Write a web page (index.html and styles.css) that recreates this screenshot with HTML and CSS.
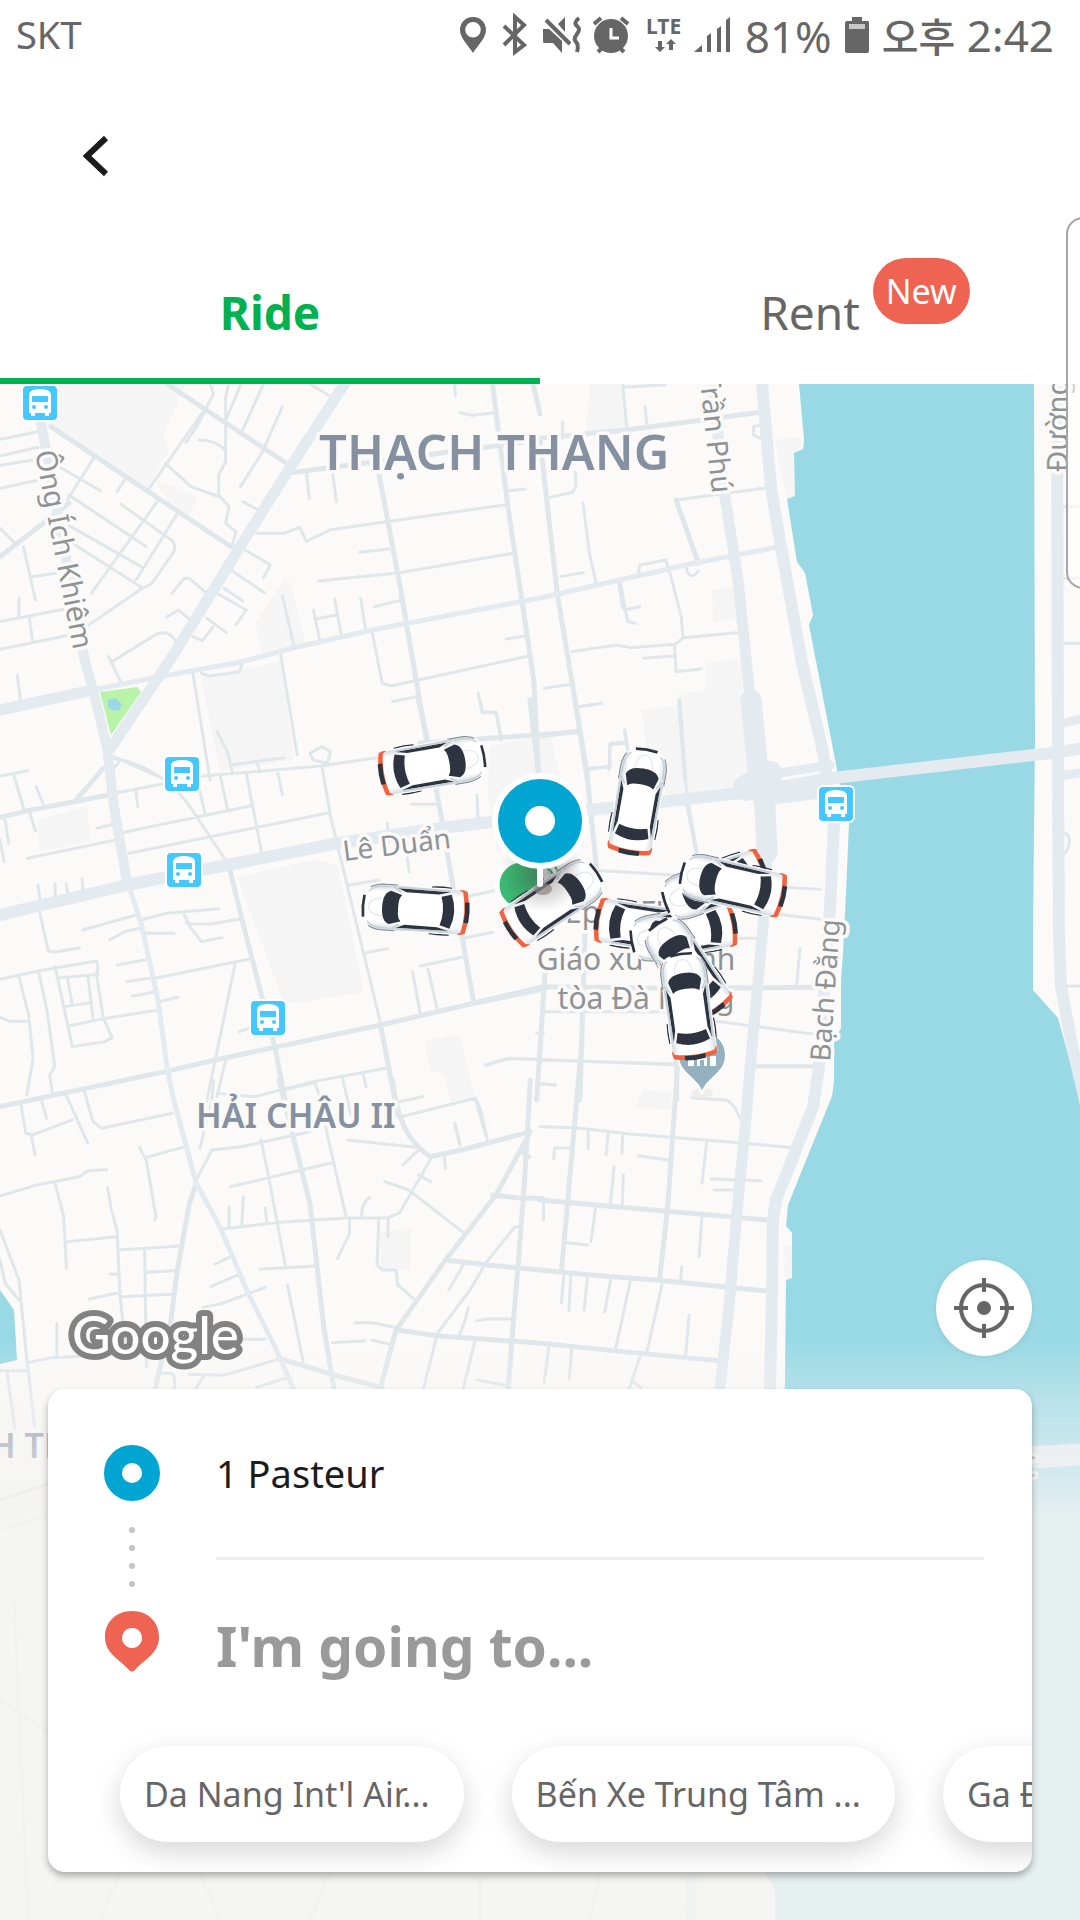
FILE: index.html
```html
<!DOCTYPE html>
<html lang="en">
<head>
<meta charset="utf-8">
<meta name="viewport" content="width=device-width, initial-scale=1">
<title>Ride</title>
<link rel="stylesheet" href="styles.css">
</head>
<body>
<div class="app">
  <header class="status">
    <span class="carrier">SKT</span>
    <div class="indicators">
      <svg class="glyphs" width="272" height="48" viewBox="459 12 272 48" aria-hidden="true">
        <path fill-rule="evenodd" d="M472 17c-8 0-13 6-13 13 0 8 8 15 13 23 5-8 13-15 13-23 0-7-5-13-13-13zm0 5a7 7 0 0 1 0 15.500a7 7 0 0 1 0-15.500z"/>
        <path class="line" d="M503 26l20 19-9 7V17l9 8-20 20"/>
        <path d="M542 29h6l13 12v12l-9-10h-9q-1 0-1-2zM564 17v15l-7-8z"/>
        <path class="line" d="M545 20l24 24"/>
        <path class="line" d="M578 18q-6 5-2 8t0 8-1 8 1 10"/>
        <circle cx="610" cy="36" r="17"/>
        <path class="line" d="M593 24l7-6M627 24l-7-6M597 52l5-5M623 52l-5-5"/>
        <path d="M610 28v10h8" fill="none" stroke="#fff" stroke-width="3"/>
        <text x="645" y="34">LTE</text>
        <path d="M657 41h4v6h3l-5 5-5-5h3zM668 50h4v-6h3l-5-5-5 5h3z"/>
        <path d="M693 52h8v-7zM706 36l4-3v19h-4zM716 29l4-3v26h-4zM725 20l4-3v35h-4z"/>
      </svg>
      <span>81%</span>
      <svg class="glyphs" width="24" height="48" viewBox="846 12 24 48" aria-hidden="true">
        <path d="M853 17h10v4h6q1 0 1 2v28q0 2-2 2h-20q-2 0-2-2V23q0-2 2-2h5z"/>
        <path d="M850 24h16v5h-16z" fill="#c8c8c8"/>
      </svg>
      <span class="time"><span class="ampm">오후</span> 2:42</span>
    </div>
  </header>

  <nav class="topbar">
    <button class="back" type="button" aria-label="Back">
      <svg width="28" height="44" viewBox="0 0 28 44" aria-hidden="true"><path d="M24 4L5 22l19 18" fill="none" stroke="#1c1c1c" stroke-width="6"/></svg>
    </button>
  </nav>

  <nav class="tabs">
    <a class="tab active" href="#ride">Ride</a>
    <a class="tab" href="#rent">Rent<span class="badge">New</span></a>
  </nav>

  <main class="stage">
    <svg class="map" viewBox="0 384 1080 1536" preserveAspectRatio="xMidYMin slice" role="img" aria-label="Map of Da Nang">
      <defs>
        <linearGradient id="fade" x1="0" y1="0" x2="0" y2="1">
          <stop offset="0" stop-color="#f3f3f2" stop-opacity="0"/>
          <stop offset=".35" stop-color="#f3f3f2" stop-opacity=".35"/>
          <stop offset="1" stop-color="#f3f3f2" stop-opacity=".86"/>
        </linearGradient>
        <linearGradient id="paint" x1="0" y1="0" x2="1" y2="0">
          <stop offset="0" stop-color="#ccd4dc"/>
          <stop offset=".18" stop-color="#fff"/>
          <stop offset=".82" stop-color="#fff"/>
          <stop offset="1" stop-color="#ccd4dc"/>
        </linearGradient>
        <radialGradient id="shade">
          <stop offset="0" stop-color="#3a3030" stop-opacity=".42"/>
          <stop offset="1" stop-color="#3a3030" stop-opacity="0"/>
        </radialGradient>
        <symbol id="bus" viewBox="0 0 38 38">
          <rect width="38" height="38" rx="6" fill="#fff"/>
          <rect x="2" y="2" width="34" height="34" rx="4" fill="#45c8ff"/>
          <path fill="#fff" fill-rule="evenodd" d="M8 11q0-6 11-6t11 6v18h-2v3h-4v-3H14v3h-4v-3H8zm3 1v6h16v-6zm2 9a2 2 0 1 0 .1 0zm12 0a2 2 0 1 0 .1 0z"/>
        </symbol>
        <g id="car">
          <path d="M-65 45h-5q-3 25 0 58M65 45h5q3 25 0 58" fill="none" stroke="#2d3440" stroke-width="4"/>
          <path d="M-40-154Q0-164 40-154 66-146 70-104L67 40V142Q0 158-67 142V40L-70-104Q-66-146-40-154z" fill="url(#paint)" stroke="#fff" stroke-width="3"/>
          <path d="M-62-80Q-64-132-44-144M62-80Q64-132 44-144" fill="none" stroke="#c6ced6" stroke-width="4"/>
          <path d="M-27-100Q-24-142 0-142T27-100" fill="none" stroke="#e6eaee" stroke-width="4"/>
          <path d="M-69-60V-104Q-66-128-58-140M69-60V-104Q66-128 58-140" fill="none" stroke="#7d868f" stroke-width="3"/>
          <path d="M-33-157Q0-162 33-157" fill="none" stroke="#2d3440" stroke-width="8"/>
          <path d="M-50-78Q-43-102 0-102T50-78L40-45Q0-58-40-45zM-43 74Q0 88 43 74L51 104Q0 126-51 104zM-60-58l11 26v98l-9 34zM60-58l-11 26v98l9 34z" fill="#2d3440"/>
          <path d="M-38-42Q-38-54 0-54T38-42L38 66Q36 79 0 79T-38 66z" fill="#fff"/>
          <path d="M-64-72l16 24M64-72l-16 24M-62-58L-61 100M62-58L61 100" fill="none" stroke="#c6ced6" stroke-width="5"/>
          <path d="M-67 126q-2 16 4 25Q0 167 63 151q6-9 4-25l-7 12Q0 152-60 138z" fill="#f1623f"/>
          <path d="M-31 145Q0 150 31 145V159Q0 163-31 159z" fill="#2d3440"/>
        </g>
      </defs>

      <rect class="land" y="384" width="1080" height="1536"/>

      <!-- building blocks -->
      <g class="block">
        <path d="M52 384H186L163 435 169 449 147 489 43 423zM153 478l45 19-10 18-20-14zM255 624l30-46 5 4 15 61-42 11z"/>
        <path d="M201 678l80-17 13 99-74 11zM237 877l81-18 20 8 26 125-68 11-12 0zM425 1041l35-7 14 63-24 5-5-27-15-4zM380 1232l31-4-1 42-29 0zM37 820l50-14 3 35-51 11z"/>
        <path d="M490 746l60-12 14 60 13 50-80 8-9-60zM642 710l37-5-1-12 28-2 0-28 34-5 12 130-100 20zM712 590l22-4 1 33-22 3zM775 440l27-3-1 12-7 4 1 43-8 3zM784 1247h8v40h-7zM590 384h30l6 48-40 0zM643 1090l28 2v18l-35-3z"/>
      </g>
      <path d="M100 692l37-5 4 5-30 43z" fill="#b9f3aa"/>
      <path d="M108 700l7-2 7 6-2 6-6 1-6-4z" fill="#99d9e5"/>

      <!-- river -->
      <path class="water" d="M799 384l5 56-1 9-9 4 1 43-8 3 10 63 8 11 8 42-4 10 29 150 11 48-3 70-3 60-2 27v48l-7 12v43l-2 13-44 109-2 21 6 7v45l-6 2-1 101-24 484 14 25V1920H1080V1105l-5-25-17-62-25-28V930l2-190-1-356z"/>
      <path class="water" d="M0 1290l14 20 3 50-17 4z"/>

      <!-- side streets -->
      <g class="lanes" transform="translate(0 380) scale(.3444 .3333)">
        <path d="M0 178L110 155M0 228l110-26M0 256l110-18M0 325l110-24M0 725l190-38M0 808l200-42M55 655v55M85 712l10 75M50 885l10 80M68 500l35 160M92 590l70-10M0 445l48 50M168 258l125 75M200 345l225 155M365 295l-25 40M350 372l150 110q15 20 0 40l-60 90-30 15L215 765M180 425l230 135M210 490l205 135M275 230L195 360M460 360L265 640M512 405L395 600"/>
        <path d="M315 830l35 75M325 845l125-80q40-20 60 20M500 640l35-45 15 0 50 45M483 712l35-22 35 30M560 770l28 12 30-40M600 715l58 43M630 640l85 50-30 45M650 625l55 38M670 570l98 68M712 510l73 45-20 38M705 365l45 25M640 350l25 30-10 50 30 25-10 40M480 250l75 70 80 30M635 345v-60l20-40V50l10-40M578 180q50 0 75 30M610 12l10 30-50 100-30 45M700 12l-45 110M765 12L700 160M820 80l-60 140-62 100M590 95L430 330"/>
        <path d="M900 12l60 38M745 460h80l45-18 20 42 70-35 510-75M925 603l235-25 330-58M1045 517l85-10M1088 680l72-18M890 280l8 75M965 275l12 90M1320 12l2 35M1335 98l35 8 65-8M1480 332l45-5M910 690l20 100M972 658l20 115M1047 655l15 95M918 717l60-12M820 648l35 155M1080 755l30 155 25 8 400-90M1140 965l70-15M1388 940l12 58 40-2 15 85M1470 777l50-8M560 880l50 320M815 825l48 300M585 880l20 8 90-12 10-30M630 1055l30 60 15 60M330 1130l130 60M310 1190l40-50"/>
        <g class="street"><path d="M0 530l200-160M148 140L670 500M485 12l350 240M845 278L1568 180M1100 280l60 330 80 480M1430 12l45 370 75 520 15 300M1548 12l20 90"/></g>
      </g>
      <g class="lanes" transform="translate(540 380) scale(.3444 .3333)">
        <path d="M240 22l125-8M240 12l12 130M305 80l6 60M65 125v50M30 352l65-15 10-20-3-40M125 368l18 150 20 90M60 590l65-12M285 580l5-25 75-15 10 35M375 570l35 140 5 65M92 815l130-20 40 8 130-10 25-20 155-15M300 835l85-7M390 795l5 80 73-8M12 925l80-12M115 980l65-10M245 690l45-10M230 600l25 125 22 5M402 960l18 240M245 1050l10 60M200 1170l3-75 50-6M395 360l255-35M640 135l-20 5v25l20 10M425 565q10 40 35 8M1520 380h48M1520 595h48M1525 790h43M145 1168l60-10"/>
        <g class="street"><path d="M0 175L250 150 640 97M0 180L50 640 140 1200M395 360l65 190M230 600l12 80M0 1068l110-15"/></g>
      </g>
      <g class="lanes" transform="translate(0 740) scale(.3444 .3333)">
        <path d="M0 108l80-16M40 105l30 105M105 140l20 50M85 215l18 58M15 240l10 70M0 300l12 65M80 355l255-55M283 265l45-12M340 158l250-50 340-30 400-60M325 55q140 20 230 150l100 155M395 155l5 45M360 277l370-80M375 340l580-122M575 130l20 90M640 110l20 95M715 100l45 240M805 90l15 75M935 80l25 150 145 620M900 40l35-20 25 15-10 35-40-10zM110 435l8 55M160 430v40M192 430l5 35M238 415l3 35M115 515l25 118 20 3 70-12M240 570l155-45M318 600l45-25 42-10M410 540l75-20 150-14M535 525l15 27h60l88-15M540 545l45 60 60-12M420 580h85M340 675l80-15M450 715l275-58M368 725l75-12M385 768l65-12M465 785l52-14M683 670l-60 300-40 200M0 718l110-25 170-30 5 20-5 20 20 130 25 60-20 12-95 15-25-120-25-120M55 710l28 115 13 130-18 110M112 695l25 120 22 165-15 25 8 50M0 832l30 12h45M165 715l120-12M195 710l15 85M255 705l15 130M185 800l80-12M200 858l100-22 155-25M695 875l30-10"/>
        <path d="M60 1090l15 90 20 5 115-45M245 1055l25 90 25 20 205-45M190 1060l65 150M120 1080l15 55M630 1060l110 10 170-45 210-40M655 960l-25 110M825 1050l90-22M915 1030l20 60M995 1015l25 115M1055 1005l8 35M1160 1085l68-15M1165 1130l215-55 30 110M1320 1150l15 55M1410 975l60-18h85M1015 435l85-15M1065 638l60-12M1220 678l130-28M1198 695l22 125M1243 688l27 120M1345 595l85-18M1330 475l130-28M1180 335l8 60M1195 193h70M1385 165l3 70M1125 250l3 60M745 65l10 30M670 75l155-22"/>
        <g class="street"><path d="M0 232l80-20 250-50M225 175l75-90M668 390l35 150 95 380 30 160M0 1100l480-105 145-35 480-105 270-65 200-42M1105 855l50 270M1265 140l20 110M1295 320l80 465"/></g>
      </g>
      <g class="lanes" transform="translate(340 700) scale(.3333)">
        <path d="M420 0l8 35 42 5 15 80M715 20l70-10M1020 0l20 280 40 230M855 90l10 70M810 200v-70l50-4M750 205l60-5M1040 315l40 200M750 510l300 18M1290 560l150 8M1290 640l150 18M1100 715h150M1380 745l-10 115M1100 960l340 45M1250 1100h190M440 1095l65-20 510 20M595 1150l50 5M610 935h370M590 1000h20"/>
        <g class="street"><path d="M235 0l30 130M570 0l60 520M705 0l40 260 25 250M240 130l480-35M400 910l210-50 390 5 440-3M615 820L590 1200M735 700l-15 500M1010 1080v120M410 360h50"/></g>
      </g>
      <g class="lanes" transform="translate(0 1080) scale(.3444 .3333)">
        <path d="M0 348l110-34 120-24 25-18 55-3M160 310l25 100 8 155M312 322l12 70 16 60 8 190 20 190M193 485l147-15M405 202l20 40 28 170-5 8M425 232l105-30M345 510l180-12M420 510l5 350M425 577l85-5M350 650l150-7M260 657l90-20M320 583h25M625 552l40-20M612 620l80-36M590 682l50-10 130-50M645 447l170-20 190-13h120l35-15 95-170M665 380v65M707 350l-5 85M770 385l5 45M670 320l300-73M580 205l35-140 5-65M570 300l45-90 85-10 200-45M758 180l20 100 52 285M945 140l60 270M755 568l160-10M835 615l45 230M1015 415v45l-35 75M1050 410q0-45 25-57M1127 415v55M1100 415l-5 140 15 15h40l5 45 45 40M1117 305l70 25 155 125M1215 285l35 20M1170 255l50-50M1010 180l195 22M1290 230l3 35M1165 110l215-55 15 30 20 95M1320 130l15 65M1515 440h-20l-85 110-45 80-95 130-40 165M1345 555l-42 75M1360 683l-10 40-15 40M1385 722l30-5h68M1380 780l-35 145M1030 728h50l70 15M965 788l95-6M1080 780l60 15M700 778h70M80 848l70-15 210-10 125-12M165 730v100M0 872h75M20 872l25 190M80 850l20 190M465 880h30q10 0 12 20v40M550 883l100 3 155-47M595 885l-30 45M745 922l85-28M0 450l55 150 25 260M0 540l15 70 40 50M1385 900l80 15M90 165l12 60"/>
        <g class="street"><path d="M570 310l-20 60-35 200-20 160-45 200M810 0l90 370 40 370 30 190M1140 0q15 170 110 230l90-20 200-55M1540 0l-20 350-45 580M1535 165l-95 180-150 200-140 205-45 170M1430 345l85 10h60M1295 540l120 15 155 15M1155 750l110 17 300 22M810 835l160 50 140 38M1510 210l25 20"/></g>
      </g>
      <g class="lanes" transform="translate(540 1040) scale(.3444 .3333)">
        <path d="M0 60l400 12M630 77h170M0 132l45 3M440 173l105 8 20 20 15 32M0 260l105 3 150 18 330 28 150 14M140 270v57M198 280l-6 63M240 285l-2 55M40 357l2-33h50M287 347l90 14M215 380l-10 110M242 405l-3 90M485 300l-15 130M497 417l145 5M505 450h60M10 485v55M162 500l-14 105M80 608l58 7M470 530l-8 120M412 680l-4 45M70 700l-8 88M90 700l-6 112M138 710l-10 100M205 720l-17 95M262 725l-42 200M355 730l-45 210M433 825l-10 120M25 925l-13 105M92 930l-7 88M290 950l-30 95M265 1020l30 25"/>
        <g class="street"><path d="M122 0L80 490 62 695M400 70L370 510 347 720M0 480l130 12 530 48M0 690l150 15 185 15 330 34M0 910l240 25 275 27"/></g>
      </g>
      <g class="lanes">
        <path d="M0 1500l60-20M0 1530l40-12M14 1600l14 320M0 1700l60 40M60 1880l-40 40M120 1872l-20 48M200 1872l20 48M330 1872l-20 48M480 1872v48M600 1872l-10 48M690 1872v48M1063 832q8 3 6 12t-5 10M1067 986h13"/>
      </g>

      <!-- main roads -->
      <g class="roads">
        <path d="M41 400v23l24 130 19 104 9 33 14 57 7 60 13 75" stroke-width="10"/>
        <path d="M127 880l14 43 17 77 9 67 5 26 24 90 24 44 28 66 27 54 19 43" stroke-width="5"/>
        <path d="M347 380l-54 83-55 87-66 107-62 92" stroke-width="11"/>
        <path d="M0 710l93-20" stroke-width="11"/>
        <path d="M93 690l65-13 83-15 52-14 79-18 168-32 155-35 83-16" stroke-width="5"/>
        <path d="M0 915l127-30 100-20 112-22 102-15 51-6 98-12 160-18 83-14 227-26 23-4M760 800l65-8" stroke-width="12"/>
        <path d="M760 776l70-11M1060 776l20-3M1060 724l20-5" stroke-width="9"/>
        <path d="M712 384l13 113 13 83 12 117 9 83" stroke-width="11"/>
        <path d="M751 700l8 80 6 27 2 46" stroke-width="21"/>
        <path d="M746 788l24-14" stroke-width="26"/>
        <path d="M767 853l-4 74-14 153-2 27-11 116-7 84-9 81-20 312-10 220" stroke-width="11"/>
        <path d="M762 384l9 103 10 60 21 116 20 84 12 76-4 84-8 116-3 44-6 40-37 93-3 20-1 70-2 98v140" stroke-width="12"/>
        <path d="M1057 384l1 396 1 157 2 50 12 63 12 50" stroke-width="12"/>
        <path d="M1020 1458l70-4" stroke-width="22"/>
      </g>

      <!-- labels -->
      <g class="district">
        <text x="319" y="470" font-size="49">THẠCH THANG</text>
        <text x="196" y="1128" font-size="34">HẢI CHÂU II</text>
        <text x="-10" y="1458" font-size="34">H TRUNG</text>
      </g>
      <g class="label">
        <text transform="translate(35 452) rotate(79)">Ông Ích Khiêm</text>
        <text transform="translate(712 494) rotate(84)" text-anchor="end">Trần Phú</text>
        <text transform="translate(1068 472) rotate(-90)">Đường</text>
        <text transform="translate(344 861) rotate(-7)" font-size="28">Lê Duẩn</text>
        <text transform="translate(830 1062) rotate(-86)" font-size="28">Bạch Đằng</text>
        <text x="1018" y="1477">C</text>
        <g font-size="30">
          <text x="565" y="923">Ep</text>
          <text x="640" y="923">FU</text>
          <text x="636" y="970" text-anchor="middle">Giáo xứ Chính</text>
          <text x="646" y="1009" text-anchor="middle">tòa Đà Nẵng</text>
        </g>
      </g>

      <!-- stops and places -->
      <use href="#bus" x="21" y="384" width="38" height="38"/>
      <use href="#bus" x="163" y="755" width="38" height="38"/>
      <use href="#bus" x="165" y="851" width="38" height="38"/>
      <use href="#bus" x="249" y="999" width="38" height="38"/>
      <use href="#bus" x="817" y="785" width="38" height="38"/>
      <circle cx="522" cy="885" r="25" fill="#3cba74" stroke="#fff" stroke-width="5"/>
      <path d="M543 866q8 3 12 12M549 862q6 3 8 8" fill="none" stroke="#3cba74" stroke-width="2"/>
      <ellipse cx="702" cy="1093" rx="11" ry="5" fill="#efedea"/>
      <path d="M702 1094c-4-17-24-19-24-39a24 24 0 0 1 48 0c0 20-20 22-24 39z" fill="#95b0bf" stroke="#fff" stroke-width="2"/>
      <path d="M688 1066v-10h6v10zM697 1066v-10h10v10h-3v-6h-4v6zM710 1066v-10h6v10z" fill="#fff"/>

      <rect y="1340" width="1080" height="180" fill="url(#fade)"/>
      <rect y="1520" width="1080" height="400" fill="#f3f3f2" opacity=".86"/>

      <!-- nearby cars -->
      <g transform="translate(340 700) scale(.3333)">
        <use href="#car" transform="translate(275 196) rotate(80)"/>
        <use href="#car" transform="translate(893 306) rotate(10)"/>
        <use href="#car" transform="translate(228 628) rotate(-86)"/>
        <use href="#car" transform="translate(638 606) rotate(56)"/>
        <use href="#car" transform="translate(922 682) rotate(99)"/>
        <use href="#car" transform="translate(1032 697) rotate(-100)"/>
        <use href="#car" transform="translate(1126 556) rotate(-109)"/>
        <use href="#car" transform="translate(1180 555) rotate(-77)"/>
        <use href="#car" transform="translate(1042 804) rotate(-34)"/>
        <use href="#car" transform="translate(1045 920) rotate(-8)"/>
      </g>

      <!-- pickup marker -->
      <ellipse cx="542" cy="874" rx="42" ry="38" fill="url(#shade)"/>
      <ellipse cx="543" cy="889" rx="9" ry="6" fill="#8d8482" opacity=".7"/>
      <path d="M540 860v24" stroke="#fff" stroke-width="6" stroke-linecap="round"/>
      <circle cx="540" cy="821" r="45" fill="#00a5d2" stroke="#fff" stroke-width="6"/>
      <circle cx="540" cy="821" r="15" fill="#fff"/>

      <text class="logo" x="72" y="1354">Google</text>
    </svg>

    <div class="overlay">
      <button class="locate" type="button" aria-label="My location">
        <svg width="60" height="60" viewBox="0 0 60 60" aria-hidden="true"><g fill="none" stroke="#666" stroke-width="4"><circle cx="30" cy="30" r="23"/><path d="M30 0v14M30 46v14M0 30h14M46 30h14"/></g><circle cx="30" cy="30" r="7" fill="#666"/></svg>
      </button>
      <section class="card">
        <form class="trip">
          <svg class="route" width="56" height="200" viewBox="0 0 56 200" aria-hidden="true">
            <circle cx="28" cy="28" r="19" fill="none" stroke="#00a5d2" stroke-width="18"/>
            <g fill="#c4c4c4"><circle cx="28" cy="85" r="3"/><circle cx="28" cy="103" r="3"/><circle cx="28" cy="121" r="3"/><circle cx="28" cy="139" r="3"/></g>
            <path fill="#ee6352" fill-rule="evenodd" d="M28 166c16 0 27 11 27 26 0 16-13 21-24 33q-3 3-6 0c-11-12-24-17-24-33 0-15 11-26 27-26zm0 17a10 10 0 1 0 .1 0z"/>
          </svg>
          <div class="fields">
            <input class="from" type="text" value="1 Pasteur" aria-label="Pick-up">
            <input class="to" type="text" placeholder="I'm going to..." aria-label="Destination">
          </div>
        </form>
        <div class="chips">
          <button class="chip" type="button">Da Nang Int'l Air...</button>
          <button class="chip" type="button">Bến Xe Trung Tâm ...</button>
          <button class="chip" type="button">Ga Đà Nẵng</button>
        </div>
      </section>
    </div>
  </main>
  <div class="edge"></div>
</div>
</body>
</html>
```
FILE: styles.css
```css
* { box-sizing: border-box; }

body {
  margin: 0;
  background: #fff;
  color: #666;
  font-family: "Noto Sans", "Noto Sans CJK KR", sans-serif;
}

button, input { font: inherit; color: inherit; border: 0; padding: 0; background: none; }

.app {
  position: relative;
  display: flex;
  flex-direction: column;
  min-height: 100vh;
  overflow: hidden;
}

.status {
  display: flex;
  align-items: center;
  justify-content: space-between;
  height: 72px;
  padding: 0 26px 0 16px;
  font-size: 44px;
  line-height: 72px;
}
.carrier { font-size: 38px; line-height: 68px; height: 72px; }
.indicators { display: flex; align-items: center; gap: 13px; }
.glyphs { display: block; fill: #666; }
.glyphs .line { fill: none; stroke: #666; stroke-width: 4; }
.glyphs text { font-size: 21px; font-weight: 700; }
.ampm { font-size: 40px; font-weight: 500; }
.time { white-space: nowrap; }

.topbar {
  display: flex;
  align-items: center;
  height: 168px;
  padding: 0 82px;
}
.back { display: flex; }

.tabs { display: flex; height: 144px; }
.tab {
  position: relative;
  flex: 1;
  padding-top: 38px;
  border-bottom: 6px solid transparent;
  color: #666;
  font-size: 46px;
  line-height: 68px;
  text-align: center;
  text-decoration: none;
}
.tab.active { color: #00b14f; border-bottom-color: #00b14f; font-weight: 700; }
.badge {
  position: absolute;
  top: 18px;
  margin-left: 13px;
  width: 97px;
  border-radius: 33px;
  background: #ee6352;
  color: #fff;
  font-size: 34px;
  line-height: 66px;
}

.stage {
  position: relative;
  flex: 1;
  display: flex;
  flex-direction: column;
  justify-content: flex-end;
}
.map { position: absolute; inset: 0; width: 100%; height: 100%; }
.land { fill: #fbfaf8; }
.water { fill: #99d9e5; }
.block { fill: #f5f5f5; }
.lanes, .street, .roads { fill: none; stroke-linejoin: round; stroke-linecap: round; }
.lanes { stroke: #e0e7eb; }
.lanes path { stroke-width: 3px; vector-effect: non-scaling-stroke; }
.lanes .street path { stroke-width: 5px; }
.roads { stroke: #e3eaf0; }
.district { fill: #8591a0; font-weight: 600; }
.label { fill: #8f9396; font-size: 29px; }
.district text, .label text { stroke: #fbfaf8; stroke-width: 7px; stroke-linejoin: round; paint-order: stroke; }
.logo {
  fill: #fff;
  stroke: #828282;
  stroke-width: 12px;
  stroke-linejoin: round;
  paint-order: stroke;
  font: 500 53px Lato, sans-serif;
}

.overlay {
  position: relative;
  display: flex;
  flex-direction: column;
  gap: 33px;
  padding: 0 48px 48px;
}
.locate {
  display: flex;
  align-self: flex-end;
  align-items: center;
  justify-content: center;
  width: 96px;
  height: 96px;
  border-radius: 50%;
  background: #fff;
  box-shadow: 0 1px 6px rgba(0, 0, 0, .08);
}
.card {
  overflow: hidden;
  padding: 56px 0 30px;
  border-radius: 17px;
  background: #fff;
  box-shadow: 0 4px 7px rgba(0, 0, 0, .3);
}
.trip { display: flex; gap: 56px; padding: 0 48px 0 56px; }
.route { flex: none; overflow: visible; }
.fields { flex: 1; min-width: 0; }
.fields input { display: block; width: 100%; outline: 0; }
.fields .from {
  height: 115px;
  padding-bottom: 56px;
  border-bottom: 3px solid #ededed;
  color: #1c1c1c;
  font-size: 38px;
}
.fields .to { height: 170px; margin-bottom: 16px; font-size: 55px; font-weight: 700; }
.to::placeholder { color: #9a9a9a; opacity: 1; }
.chips { display: flex; gap: 48px; padding-left: 72px; }
.chip {
  flex: none;
  height: 96px;
  padding: 0 34px 0 24px;
  border-radius: 48px;
  background: #fff;
  box-shadow: 0 10px 28px rgba(0, 0, 0, .16);
  color: #666;
  font-size: 34px;
}

.edge {
  position: absolute;
  top: 217px;
  right: -20px;
  width: 34px;
  height: 372px;
  border: 2px solid #a6a6a6;
  border-radius: 20px;
  background: rgba(255, 255, 255, .6);
}
```
